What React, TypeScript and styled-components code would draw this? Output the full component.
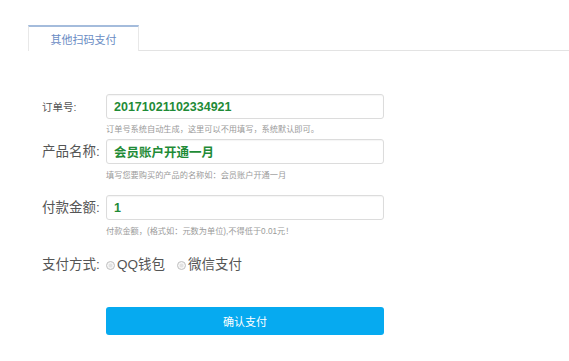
import React, { useState } from 'react';
import styled, { createGlobalStyle } from 'styled-components';

const GlobalStyle = createGlobalStyle`
  html, body {
    margin: 0;
    padding: 0;
    background: #ffffff;
  }
  body {
    font-family: "Liberation Sans", "Noto Sans CJK SC", sans-serif;
    color: #555;
  }
`;

const Page = styled.div`
  width: 569px;
  height: 361px;
  padding-top: 25px;
  box-sizing: border-box;
`;

const TabBar = styled.div`
  display: flex;
  align-items: stretch;
  padding-left: 28px;
  height: 26px;
`;

const Tab = styled.div`
  width: 111px;
  box-sizing: border-box;
  border-top: 2px solid #a4bcdc;
  border-left: 1px solid #e8e8e8;
  border-right: 1px solid #e8e8e8;
  background: #fff;
  display: flex;
  align-items: center;
  justify-content: center;
  font-size: 11px;
  color: #6a8cc4;
`;

const TabRest = styled.div`
  flex: 1;
  border-bottom: 1px solid #e3e3e3;
`;

const Form = styled.div`
  padding: 43px 0 0 42px;
  display: flex;
  flex-direction: column;
`;

const Row = styled.div<{ $gap: number }>`
  display: grid;
  grid-template-columns: 64px 278px;
  align-items: center;
  margin-bottom: ${p => p.$gap}px;
`;

const Label = styled.div<{ $small?: boolean }>`
  font-size: ${p => (p.$small ? 10.5 : 13.5)}px;
  color: #555;
  white-space: nowrap;
  line-height: 20px;
`;

const Input = styled.div`
  height: 25px;
  box-sizing: border-box;
  border: 1px solid #dcdcdc;
  border-radius: 3px;
  padding-left: 7px;
  display: flex;
  align-items: center;
  font-size: 12.5px;
  font-weight: bold;
  color: #1f8b37;
  box-shadow: inset 0 1px 1px rgba(0, 0, 0, 0.04);
`;

const Help = styled.div<{ $top: number; $gap: number }>`
  margin: ${p => p.$top}px 0 ${p => p.$gap}px 64px;
  font-size: 8.2px;
  line-height: 10px;
  color: #9a9a9a;
  white-space: nowrap;
`;

const Options = styled.div`
  display: flex;
  align-items: center;
  gap: 12px;
`;

const Option = styled.label`
  display: flex;
  align-items: center;
  gap: 2px;
  font-size: 13.5px;
  color: #555;
  line-height: 20px;
  cursor: pointer;
`;

const Dot = styled.span<{ $on: boolean }>`
  width: 7px;
  height: 7px;
  border-radius: 50%;
  border: 1px solid #c4c4c4;
  background: ${p => (p.$on ? '#1f8b37' : '#e2e2e2')};
  box-shadow: inset 0 0 0 1.5px #f6f6f6;
`;

const Submit = styled.button`
  margin-left: 64px;
  width: 278px;
  height: 28px;
  border: none;
  border-radius: 3px;
  background: #06aaf0;
  color: #fff;
  font-family: inherit;
  font-size: 11px;
  cursor: pointer;
`;

const App: React.FC = () => {
  const [pay, setPay] = useState<string>('');

  return (
    <Page>
      <GlobalStyle />
      <TabBar>
        <Tab>其他扫码支付</Tab>
        <TabRest />
      </TabBar>
      <Form>
        <Row $gap={0}>
          <Label $small>订单号:</Label>
          <Input>20171021102334921</Input>
        </Row>
        <Help $top={6} $gap={4}>订单号系统自动生成，这里可以不用填写，系统默认即可。</Help>

        <Row $gap={0}>
          <Label>产品名称:</Label>
          <Input>会员账户开通一月</Input>
        </Row>
        <Help $top={7} $gap={14}>填写您要购买的产品的名称如：会员账户开通一月</Help>

        <Row $gap={0}>
          <Label>付款金额:</Label>
          <Input>1</Input>
        </Row>
        <Help $top={7} $gap={18}>付款金额，(格式如：元数为单位),不得低于0.01元！</Help>

        <Row $gap={32}>
          <Label>支付方式:</Label>
          <Options>
            <Option onClick={() => setPay('qq')}>
              <Dot $on={pay === 'qq'} />
              QQ钱包
            </Option>
            <Option onClick={() => setPay('wx')}>
              <Dot $on={pay === 'wx'} />
              微信支付
            </Option>
          </Options>
        </Row>

        <Submit>确认支付</Submit>
      </Form>
    </Page>
  );
};

export default App;
